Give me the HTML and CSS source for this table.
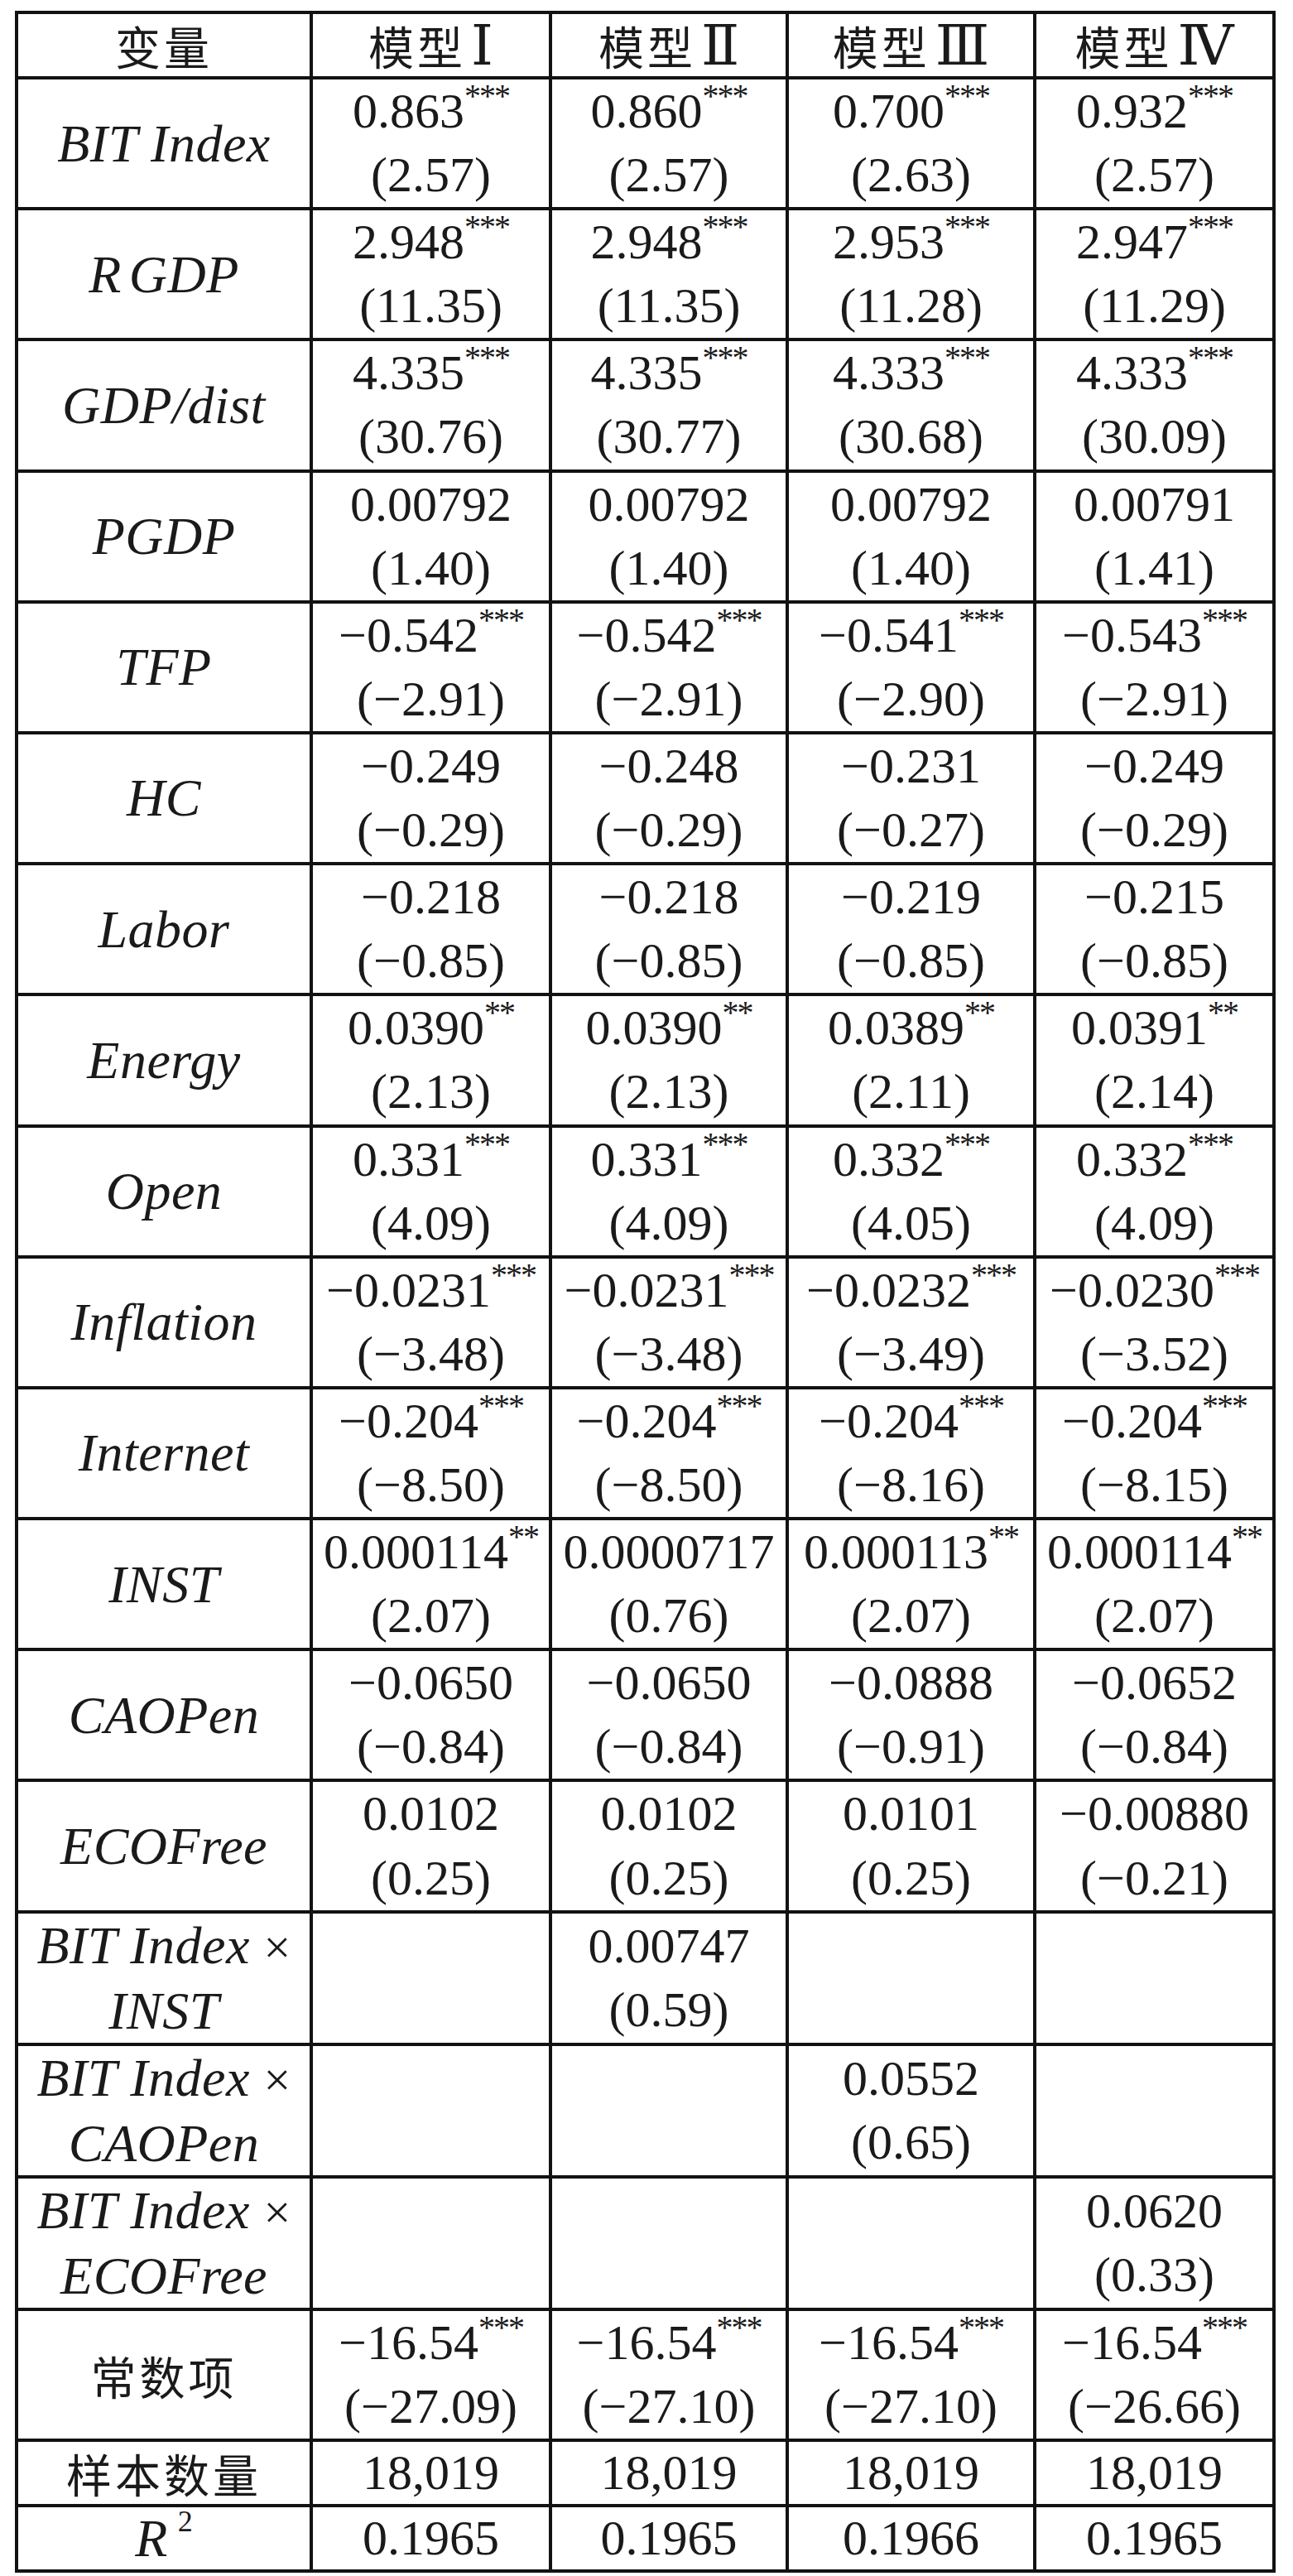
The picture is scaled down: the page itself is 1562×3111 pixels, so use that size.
FILE: index.html
```html
<!DOCTYPE html>
<html lang="zh-CN">
<head>
<meta charset="utf-8">
<title>回归结果</title>
<link rel="stylesheet" href="styles.css">
</head>
<body>
<table class="reg">
  <colgroup>
    <col class="c-var">
    <col class="c-m1">
    <col class="c-m2">
    <col class="c-m3">
    <col class="c-m4">
  </colgroup>
  <thead>
    <tr class="head">
      <th>变量</th>
      <th>模型<span class="rn">Ⅰ</span></th>
      <th>模型<span class="rn">Ⅱ</span></th>
      <th>模型<span class="rn">Ⅲ</span></th>
      <th>模型<span class="rn">Ⅳ</span></th>
    </tr>
  </thead>
  <tbody>
    <tr>
      <td class="var">BIT Index</td>
      <td><div>0.863<sup>***</sup></div><div>(2.57)</div></td>
      <td><div>0.860<sup>***</sup></div><div>(2.57)</div></td>
      <td><div>0.700<sup>***</sup></div><div>(2.63)</div></td>
      <td><div>0.932<sup>***</sup></div><div>(2.57)</div></td>
    </tr>
    <tr>
      <td class="var"><span class="gap">R</span>GDP</td>
      <td><div>2.948<sup>***</sup></div><div>(11.35)</div></td>
      <td><div>2.948<sup>***</sup></div><div>(11.35)</div></td>
      <td><div>2.953<sup>***</sup></div><div>(11.28)</div></td>
      <td><div>2.947<sup>***</sup></div><div>(11.29)</div></td>
    </tr>
    <tr>
      <td class="var">GDP/dist</td>
      <td><div>4.335<sup>***</sup></div><div>(30.76)</div></td>
      <td><div>4.335<sup>***</sup></div><div>(30.77)</div></td>
      <td><div>4.333<sup>***</sup></div><div>(30.68)</div></td>
      <td><div>4.333<sup>***</sup></div><div>(30.09)</div></td>
    </tr>
    <tr>
      <td class="var">PGDP</td>
      <td><div>0.00792</div><div>(1.40)</div></td>
      <td><div>0.00792</div><div>(1.40)</div></td>
      <td><div>0.00792</div><div>(1.40)</div></td>
      <td><div>0.00791</div><div>(1.41)</div></td>
    </tr>
    <tr>
      <td class="var">TFP</td>
      <td><div>−0.542<sup>***</sup></div><div>(−2.91)</div></td>
      <td><div>−0.542<sup>***</sup></div><div>(−2.91)</div></td>
      <td><div>−0.541<sup>***</sup></div><div>(−2.90)</div></td>
      <td><div>−0.543<sup>***</sup></div><div>(−2.91)</div></td>
    </tr>
    <tr>
      <td class="var">HC</td>
      <td><div>−0.249</div><div>(−0.29)</div></td>
      <td><div>−0.248</div><div>(−0.29)</div></td>
      <td><div>−0.231</div><div>(−0.27)</div></td>
      <td><div>−0.249</div><div>(−0.29)</div></td>
    </tr>
    <tr>
      <td class="var">Labor</td>
      <td><div>−0.218</div><div>(−0.85)</div></td>
      <td><div>−0.218</div><div>(−0.85)</div></td>
      <td><div>−0.219</div><div>(−0.85)</div></td>
      <td><div>−0.215</div><div>(−0.85)</div></td>
    </tr>
    <tr>
      <td class="var">Energy</td>
      <td><div>0.0390<sup>**</sup></div><div>(2.13)</div></td>
      <td><div>0.0390<sup>**</sup></div><div>(2.13)</div></td>
      <td><div>0.0389<sup>**</sup></div><div>(2.11)</div></td>
      <td><div>0.0391<sup>**</sup></div><div>(2.14)</div></td>
    </tr>
    <tr>
      <td class="var">Open</td>
      <td><div>0.331<sup>***</sup></div><div>(4.09)</div></td>
      <td><div>0.331<sup>***</sup></div><div>(4.09)</div></td>
      <td><div>0.332<sup>***</sup></div><div>(4.05)</div></td>
      <td><div>0.332<sup>***</sup></div><div>(4.09)</div></td>
    </tr>
    <tr>
      <td class="var">Inflation</td>
      <td><div>−0.0231<sup>***</sup></div><div>(−3.48)</div></td>
      <td><div>−0.0231<sup>***</sup></div><div>(−3.48)</div></td>
      <td><div>−0.0232<sup>***</sup></div><div>(−3.49)</div></td>
      <td><div>−0.0230<sup>***</sup></div><div>(−3.52)</div></td>
    </tr>
    <tr>
      <td class="var">Internet</td>
      <td><div>−0.204<sup>***</sup></div><div>(−8.50)</div></td>
      <td><div>−0.204<sup>***</sup></div><div>(−8.50)</div></td>
      <td><div>−0.204<sup>***</sup></div><div>(−8.16)</div></td>
      <td><div>−0.204<sup>***</sup></div><div>(−8.15)</div></td>
    </tr>
    <tr>
      <td class="var">INST</td>
      <td><div>0.000114<sup>**</sup></div><div>(2.07)</div></td>
      <td><div>0.0000717</div><div>(0.76)</div></td>
      <td><div>0.000113<sup>**</sup></div><div>(2.07)</div></td>
      <td><div>0.000114<sup>**</sup></div><div>(2.07)</div></td>
    </tr>
    <tr>
      <td class="var">CAOPen</td>
      <td><div>−0.0650</div><div>(−0.84)</div></td>
      <td><div>−0.0650</div><div>(−0.84)</div></td>
      <td><div>−0.0888</div><div>(−0.91)</div></td>
      <td><div>−0.0652</div><div>(−0.84)</div></td>
    </tr>
    <tr>
      <td class="var">ECOFree</td>
      <td><div>0.0102</div><div>(0.25)</div></td>
      <td><div>0.0102</div><div>(0.25)</div></td>
      <td><div>0.0101</div><div>(0.25)</div></td>
      <td><div>−0.00880</div><div>(−0.21)</div></td>
    </tr>
    <tr>
      <td class="var"><div>BIT Index <span class="op">×</span></div><div>INST</div></td>
      <td></td>
      <td><div>0.00747</div><div>(0.59)</div></td>
      <td></td>
      <td></td>
    </tr>
    <tr>
      <td class="var"><div>BIT Index <span class="op">×</span></div><div>CAOPen</div></td>
      <td></td>
      <td></td>
      <td><div>0.0552</div><div>(0.65)</div></td>
      <td></td>
    </tr>
    <tr>
      <td class="var"><div>BIT Index <span class="op">×</span></div><div>ECOFree</div></td>
      <td></td>
      <td></td>
      <td></td>
      <td><div>0.0620</div><div>(0.33)</div></td>
    </tr>
    <tr>
      <td class="cn">常数项</td>
      <td><div>−16.54<sup>***</sup></div><div>(−27.09)</div></td>
      <td><div>−16.54<sup>***</sup></div><div>(−27.10)</div></td>
      <td><div>−16.54<sup>***</sup></div><div>(−27.10)</div></td>
      <td><div>−16.54<sup>***</sup></div><div>(−26.66)</div></td>
    </tr>
    <tr class="single">
      <td class="cn">样本数量</td>
      <td>18,019</td>
      <td>18,019</td>
      <td>18,019</td>
      <td>18,019</td>
    </tr>
    <tr class="single">
      <td class="var">R<sup class="sq">2</sup></td>
      <td>0.1965</td>
      <td>0.1965</td>
      <td>0.1966</td>
      <td>0.1965</td>
    </tr>
  </tbody>
</table>
</body>
</html>
```

FILE: styles.css
```css
html, body {
  margin: 0;
  padding: 0;
  background: #ffffff;
}

body {
  padding: 13px 0 0 18px;
  color: #1a1a1a;
  font-family: "Liberation Serif", "Times New Roman", serif;
}

.reg {
  border-collapse: separate;
  border-spacing: 0;
  table-layout: fixed;
  width: 1523px;
  border-top: 4px solid #121212;
  border-left: 4px solid #121212;
}

.c-var { width: 356px; }
.c-m1 { width: 289px; }
.c-m2 { width: 286px; }
.c-m3 { width: 299px; }
.c-m4 { width: 289px; }

.reg th,
.reg td {
  padding: 0;
  border-right: 4px solid #121212;
  border-bottom: 4px solid #121212;
  text-align: center;
  vertical-align: middle;
  white-space: nowrap;
}

.reg th {
  font-family: "Noto Sans CJK SC", "Noto Sans CJK TC", sans-serif;
  font-weight: 400;
  font-size: 55px;
  line-height: 75px;
  height: 75px;
  letter-spacing: 4px;
}

.rn {
  font-family: "DejaVu Serif", "Liberation Serif", "Noto Sans CJK SC", serif;
  font-size: 68px;
  line-height: 0;
  margin-left: 6px;
  letter-spacing: 0;
}

.reg td {
  font-size: 60px;
  line-height: 77.1px;
}

.reg td.var {
  font-style: italic;
  font-size: 64px;
  letter-spacing: 0.5px;
}

.reg td.cn {
  font-family: "Noto Sans CJK SC", "Noto Sans CJK TC", sans-serif;
  font-size: 55px;
  letter-spacing: 4px;
}

.gap {
  margin-right: 9px;
}

.op {
  font-style: normal;
  font-size: 58px;
}

.reg sup {
  font-size: 40px;
  line-height: 0;
  vertical-align: 25px;
  letter-spacing: -2px;
}

.reg sup.sq {
  font-style: normal;
  font-size: 36px;
  vertical-align: 30px;
  margin-left: 12px;
  letter-spacing: 0;
}

.single td {
  line-height: 75px;
}
```
